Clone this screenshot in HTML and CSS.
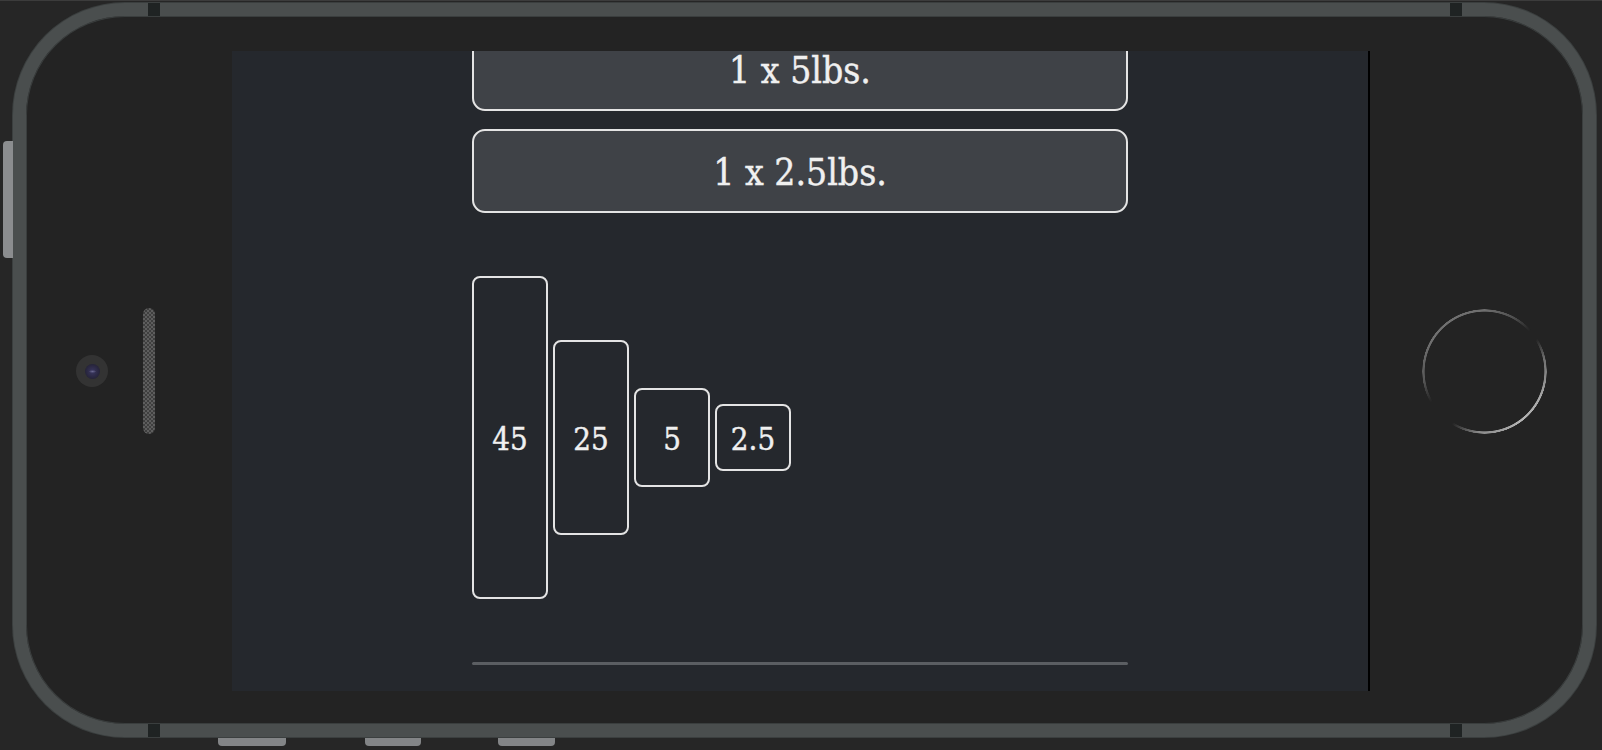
FILE: index.html
```html
<!DOCTYPE html>
<html lang="en">
<head>
<meta charset="utf-8">
<title>Plate calculator</title>
<link rel="stylesheet" href="styles.css">
</head>
<body>
<div class="page">
  <div class="phone">
    <span class="volume"></span>
    <span class="notch notch-tl"></span>
    <span class="notch notch-tr"></span>
    <span class="notch notch-bl"></span>
    <span class="notch notch-br"></span>
    <span class="key key-1"></span>
    <span class="key key-2"></span>
    <span class="key key-3"></span>

    <div class="side side-left">
      <div class="camera"><div class="lens"></div></div>
      <div class="speaker"></div>
    </div>

    <div class="screen">
      <div class="content">
        <div class="plate-list">
          <div class="plate-btn">1 x 5lbs.</div>
          <div class="plate-btn">1 x 2.5lbs.</div>
        </div>
        <div class="bar">
          <div class="plate p45">45</div>
          <div class="plate p25">25</div>
          <div class="plate p5">5</div>
          <div class="plate p2">2.5</div>
        </div>
        <div class="rule"></div>
      </div>
    </div>

    <div class="side side-right">
      <div class="home"></div>
    </div>
  </div>
</div>
</body>
</html>
```

FILE: styles.css
```css
html, body {
  margin: 0;
  padding: 0;
}

body {
  background: #262626;
  width: 1602px;
  height: 750px;
  overflow: hidden;
}

.page {
  border-top: 1px solid #3c3c3c;
  padding: 2px 0 0 13px;
  box-sizing: border-box;
  height: 750px;
}

.phone {
  position: relative;
  box-sizing: border-box;
  width: 1583px;
  height: 734px;
  border: 13px solid #4a4e4e;
  border-radius: 112px;
  background: #232323;
  display: grid;
  grid-template-columns: 206px 1138px 1fr;
  align-items: center;
  padding: 35px 0 33px;
  box-shadow: inset 0 0 0 1px #3a3e3e, 0 0 0 1px #3b3f3f;
}

/* decorations on the frame */
.volume {
  position: absolute;
  left: -23px;
  top: 125px;
  width: 10px;
  height: 117px;
  background: #8b8d8f;
  border-radius: 4px 0 0 4px;
}

.notch {
  position: absolute;
  width: 12px;
  height: 13px;
  background: #1f2323;
}
.notch-tl { left: 122px; top: -13px; }
.notch-tr { left: 1424px; top: -13px; }
.notch-bl { left: 122px; top: 708px; }
.notch-br { left: 1424px; top: 708px; }

.key {
  position: absolute;
  top: 722px;
  height: 8px;
  background: #838587;
  border-radius: 0 0 4px 4px;
}
.key-1 { left: 192px; width: 68px; }
.key-2 { left: 339px; width: 56px; }
.key-3 { left: 472px; width: 57px; }

/* left side: camera + speaker */
.side-left {
  display: flex;
  align-items: center;
  padding-left: 50px;
  gap: 35px;
}

.camera {
  width: 32px;
  height: 32px;
  border-radius: 50%;
  background: #333333;
  display: flex;
  align-items: center;
  justify-content: center;
}

.lens {
  width: 15px;
  height: 15px;
  border-radius: 50%;
  background:
    linear-gradient(90deg, #00000000 30%, #1e1c2c00 30%, #00000000 70%),
    radial-gradient(ellipse 4px 1.5px at 50% 50%, #6a6890 0, #6a689000 100%),
    radial-gradient(circle, #3a3760 0, #27253c 65%, #1c1b26 100%);
}

.speaker {
  width: 12px;
  height: 126px;
  border-radius: 6px;
  background: repeating-conic-gradient(#5e5e5e 0 25%, #3f3f3f 0 50%) 0 0 / 4px 4px;
}

/* screen */
.screen {
  height: 640px;
  background: #25282d;
  border-right: 2px solid #000;
  overflow: hidden;
  display: flex;
  justify-content: center;
}

.content {
  width: 656px;
  margin-top: -24px;
  display: flex;
  flex-direction: column;
}

.plate-list {
  display: flex;
  flex-direction: column;
  gap: 18px;
}

.plate-btn {
  box-sizing: border-box;
  height: 84px;
  padding-top: 2px;
  border: 2px solid #e4e4e4;
  border-radius: 13px;
  background: #3f4247;
  color: #f0f0f0;
  font-family: "DejaVu Serif", "Liberation Serif", serif;
  font-stretch: condensed;
  font-size: 37px;
  -webkit-text-stroke: 0.4px #f0f0f0;
  display: flex;
  align-items: center;
  justify-content: center;
}

.bar {
  margin-top: 63px;
  height: 323px;
  display: flex;
  align-items: center;
  gap: 5px;
}

.plate {
  box-sizing: border-box;
  width: 76px;
  padding-top: 3px;
  border: 2px solid #e4e4e4;
  border-radius: 8px;
  color: #f0f0f0;
  font-family: "DejaVu Serif", "Liberation Serif", serif;
  font-stretch: condensed;
  font-size: 31px;
  -webkit-text-stroke: 0.4px #f0f0f0;
  display: flex;
  align-items: center;
  justify-content: center;
}
.p45 { height: 323px; }
.p25 { height: 195px; }
.p5 { height: 99px; }
.p2 { height: 67px; }

.rule {
  margin-top: 63px;
  height: 3px;
  border-radius: 2px;
  background: #5b5e62;
}

/* right side: home button */
.side-right {
  display: flex;
  align-items: center;
  padding-left: 52px;
}

.home {
  width: 125px;
  height: 125px;
  border-radius: 50%;
  background: conic-gradient(
    #6e6e6e 0deg,
    #505050 28deg,
    #23232300 48deg,
    #23232300 58deg,
    #707070 78deg,
    #a8a8a8 115deg,
    #b4b4b4 145deg,
    #8a8a8a 185deg,
    #23232300 212deg,
    #23232300 240deg,
    #585858 262deg,
    #707070 300deg,
    #6e6e6e 360deg
  );
  -webkit-mask: radial-gradient(circle, #0000 59.5px, #000 60.2px, #000 62px, #0000 62.5px);
  mask: radial-gradient(circle, #0000 59.5px, #000 60.2px, #000 62px, #0000 62.5px);
}
```
